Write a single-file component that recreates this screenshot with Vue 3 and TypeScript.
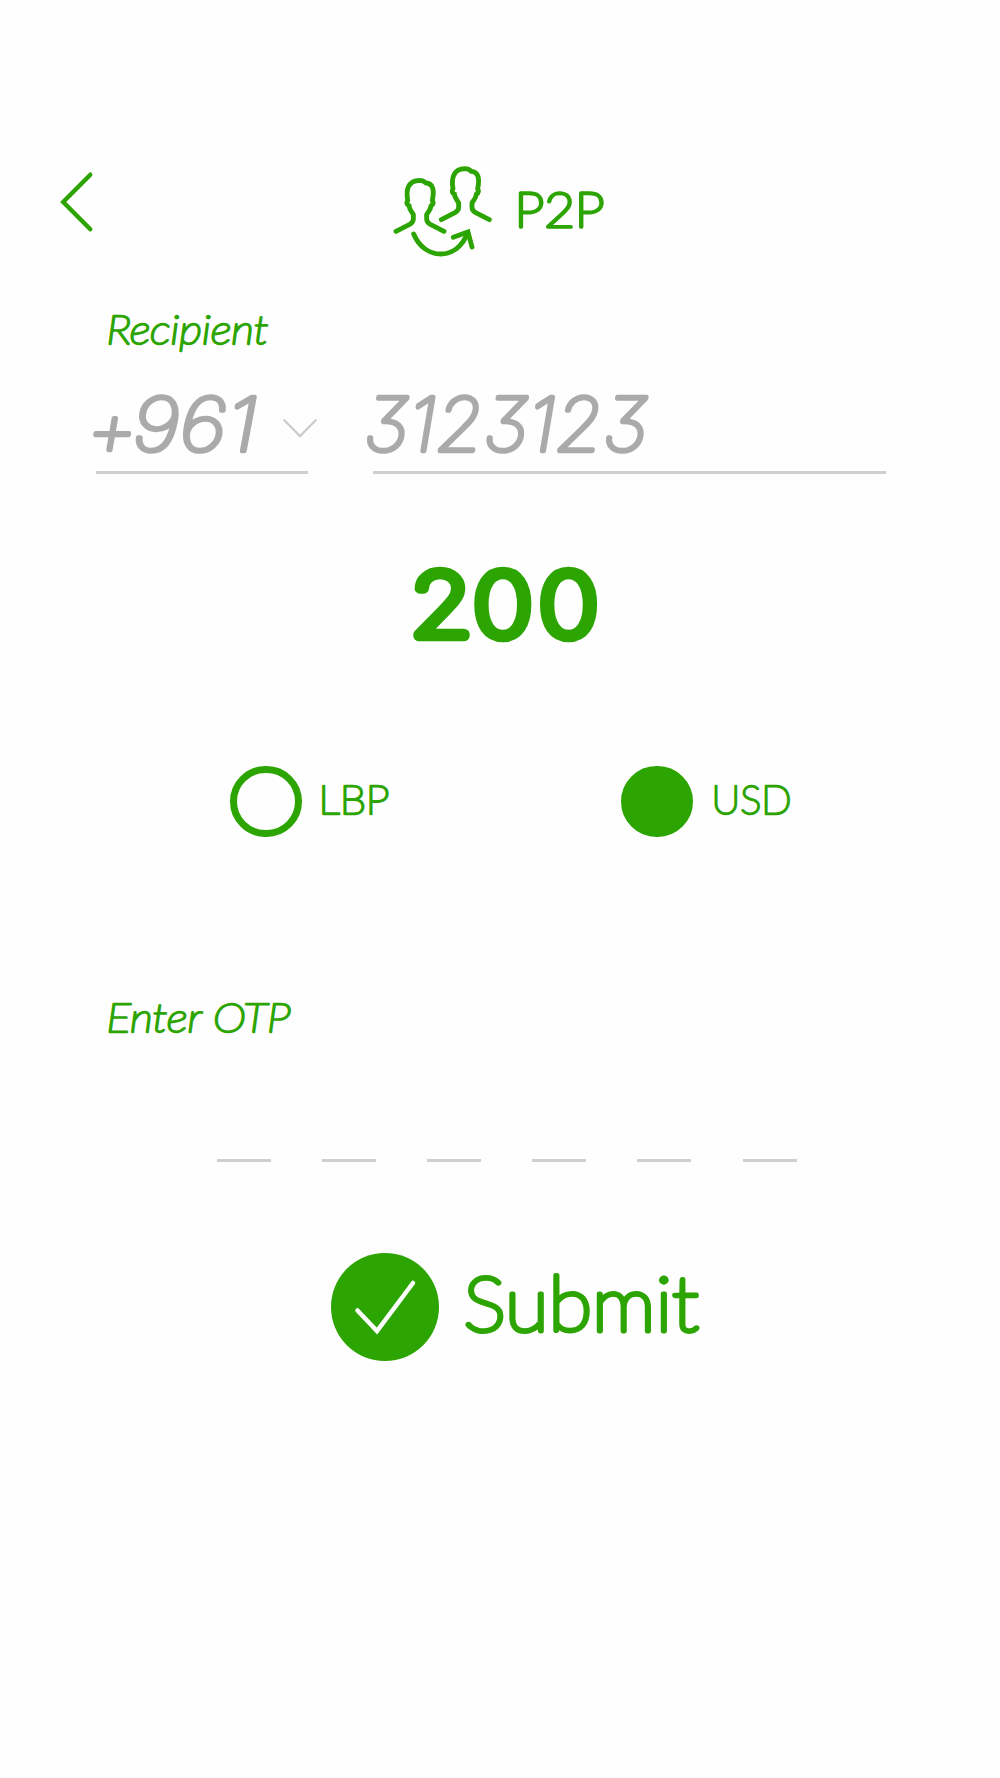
<script setup lang="ts">
import { ref } from 'vue'

type Currency = 'LBP' | 'USD'

const currency = ref<Currency>('USD')
const currencies: Currency[] = ['LBP', 'USD']
const otpSlots = 6
</script>

<template>
  <main class="screen">
    <header class="header">
      <button class="back" aria-label="Back">
        <svg width="32" height="60" viewBox="0 0 32 60">
          <path d="M29.3 2.7 2.2 30l27.1 27.3" class="line" stroke-width="4.4" />
        </svg>
      </button>
      <svg class="people" width="98" height="91" viewBox="42 48 294 273">
        <g class="line" stroke-width="14.5">
          <path id="person" d="M48 244 89 223Q100 217 100 207V194C97 188 88 179 87 167C80 164 79 159 83 151C78 122 82 92 119 91C128 91 133 94 138 99C158 100 164 119 157 151C161 158 159 164 153 168C152 180 143 188 140 194V207Q140 217 151 223L192 244" />
          <use href="#person" x="136" y="-35" />
          <path d="M101 252C118 293 150 312 182 312C215 312 247 292 263 248" />
          <path d="M220 262 264 246 276 291" />
        </g>
      </svg>
      <svg class="title" width="86" height="37">
        <text class="letters" x="-3.5" y="35.5" font-size="47" stroke-width="3.3" textLength="90" lengthAdjust="spacingAndGlyphs">P2P</text>
      </svg>
    </header>

    <section class="recipient">
      <svg class="caption" width="162" height="42">
        <text class="letters slant" x="-1.5" y="30" font-size="40" stroke-width="2.3" textLength="162" lengthAdjust="spacingAndGlyphs">Recipient</text>
      </svg>
      <div class="phone">
        <div class="field code">
          <svg width="162" height="62">
            <text class="digits" x="-6.5" y="63" font-size="77" stroke-width="4.4" textLength="51" lengthAdjust="spacingAndGlyphs">+</text>
            <text class="digits" x="39.5" y="58" font-size="74" stroke-width="4.4" textLength="125" lengthAdjust="spacingAndGlyphs">961</text>
          </svg>
          <svg class="chevron" width="34" height="18" viewBox="0 0 34 18">
            <path d="M1.3 1.3 17 17 32.7 1.3" />
          </svg>
        </div>
        <div class="field number">
          <svg width="284" height="62">
            <text class="digits" x="-2.5" y="58" font-size="74" stroke-width="4.4" textLength="284" lengthAdjust="spacingAndGlyphs">3123123</text>
          </svg>
        </div>
      </div>
    </section>

    <svg class="amount" width="184" height="76">
      <text class="digits" x="-2.5" y="69" font-size="87" stroke-width="10.4" transform="scale(1.16 1)" letter-spacing="5.2">2<tspan dx="-5">00</tspan></text>
    </svg>

    <section class="currencies">
      <div v-for="c in currencies" :key="c" class="option" @click="currency = c">
        <span class="radio" :class="{ on: currency === c }"></span>
        <svg width="76" height="33">
          <text class="letters" :x="c === 'LBP' ? -3.5 : -1.5" y="28.5" font-size="40" stroke-width="2.4" :textLength="c === 'LBP' ? 71 : 80" lengthAdjust="spacingAndGlyphs">{{ c }}</text>
        </svg>
      </div>
    </section>

    <section class="otp">
      <svg class="caption" width="186" height="34">
        <text class="letters slant" x="-1.5" y="30.5" font-size="40" stroke-width="2.3" textLength="184" lengthAdjust="spacingAndGlyphs">Enter OTP</text>
      </svg>
      <div class="slots">
        <span v-for="n in otpSlots" :key="n" class="slot"></span>
      </div>
    </section>

    <button class="submit">
      <span class="badge">
        <svg width="62" height="58" viewBox="0 0 62 58">
          <path d="M3.5 32.5 23 53 59 5" />
        </svg>
      </span>
      <svg width="236" height="64">
        <text class="letters" x="-2.5" y="60.5" font-size="76" stroke-width="4.9" textLength="235" lengthAdjust="spacingAndGlyphs">Submit</text>
      </svg>
    </button>
  </main>
</template>

<style>
body { background: #fefefe; }
</style>

<style scoped>
.screen {
  width: 1000px;
  height: 1778px;
  display: flex;
  flex-direction: column;
  background: #fefefe;
  overflow: hidden;
}
svg { display: block; overflow: visible; flex: none; }
button { border: 0; padding: 0; background: none; display: flex; }
.line { fill: none; stroke: #2ca402; stroke-linecap: round; stroke-linejoin: miter; }
.letters, .digits { fill: #2ca402; stroke: #2ca402; stroke-linejoin: round; }
.letters { font-family: Lato, sans-serif; font-weight: 100; }
.slant { font-style: italic; }
.digits { font-family: Inter, sans-serif; font-weight: 100; font-feature-settings: "cv09"; }
.field .digits { fill: #aaa; stroke: #aaa; font-style: italic; }
.header { display: flex; align-items: flex-start; padding: 166px 0 0 60px; height: 91px; }
.back { margin: 6px 0 0 0.5px; }
.people { margin: 0 0 0 301.5px; }
.title { margin: 25px 0 0 26px; }
.recipient { padding: 57px 0 0 108px; }
.phone { display: flex; gap: 65px; margin: 37px 0 0 -12px; }
.field { height: 78px; border-bottom: 3px solid #cfcfcf; display: flex; align-items: flex-start; }
.code { width: 212px; }
.code > svg:first-child { margin-left: -3px; }
.chevron { margin: 26px 0 0 28px; }
.chevron path { fill: none; stroke: #ccc; stroke-width: 2.3; stroke-linecap: round; }
.number { width: 513px; }
.number > svg { margin-left: -7px; }
.amount { margin: 93px 0 0 413px; }
.currencies { display: flex; padding: 122.5px 0 0 230px; gap: 223.5px; }
.option { display: flex; align-items: center; gap: 20px; cursor: pointer; }
.radio { box-sizing: border-box; width: 71.5px; height: 71.5px; border: 7.5px solid #2ca402; border-radius: 50%; }
.radio.on { background: #2ca402; }
.otp { padding: 164px 0 0 108px; }
.slots { display: flex; gap: 51px; margin: 124px 0 0 109px; }
.slot { width: 54px; height: 3px; background: #cfcfcf; }
.slot:last-child { margin-left: 1px; }
.submit { margin: 91px 0 0 331px; gap: 26.5px; align-items: flex-start; }
.submit > svg { margin-top: 17px; }
.badge { width: 108px; height: 108px; border-radius: 50%; background: #2ca402; display: flex; align-items: center; justify-content: center; }
.badge path { fill: none; stroke: #fefefe; stroke-width: 4.5; stroke-linecap: round; }
</style>
